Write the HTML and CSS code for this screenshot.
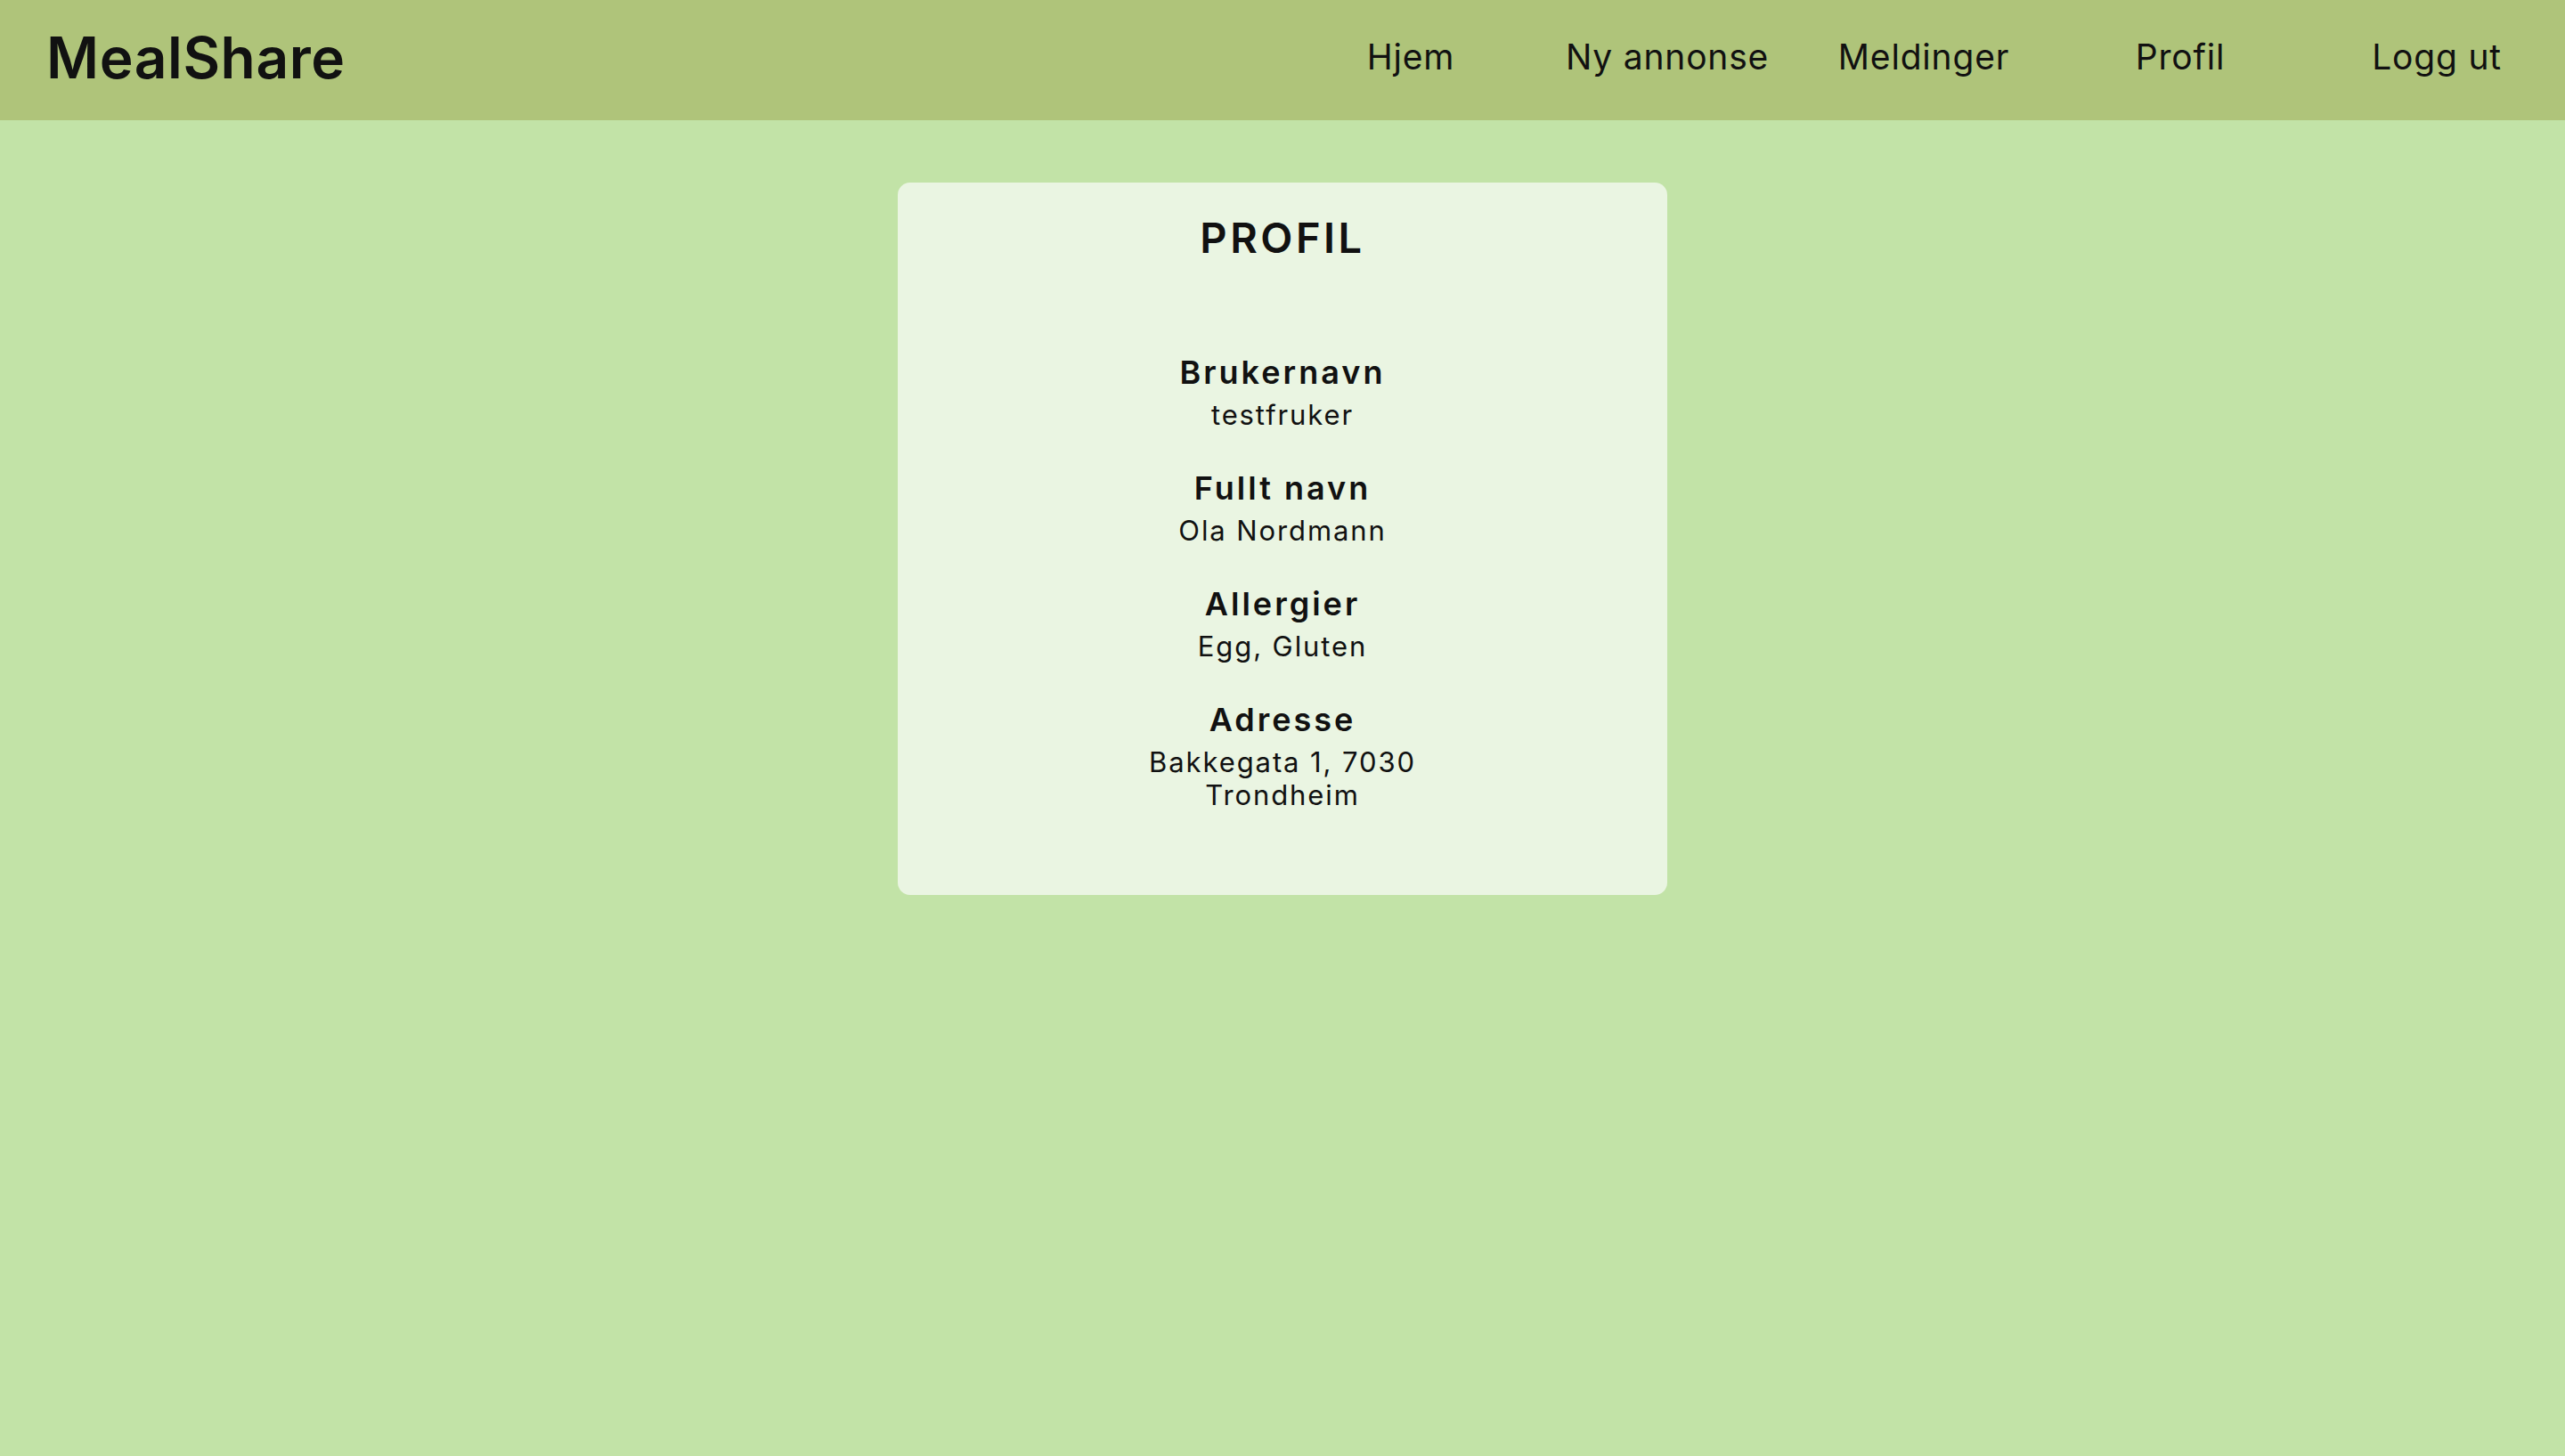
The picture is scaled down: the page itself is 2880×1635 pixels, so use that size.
FILE: index.html
```html
<!DOCTYPE html>
<html lang="no">
<head>
<meta charset="utf-8">
<title>MealShare – Profil</title>
<link rel="stylesheet" href="styles.css">
</head>
<body>
<header class="topbar">
  <div class="logo">MealShare</div>
  <nav class="nav">
    <a class="nav-item" href="#">Hjem</a>
    <a class="nav-item" href="#">Ny annonse</a>
    <a class="nav-item" href="#">Meldinger</a>
    <a class="nav-item" href="#">Profil</a>
    <a class="nav-item" href="#">Logg ut</a>
  </nav>
</header>
<main class="main">
  <section class="card">
    <h1 class="card-title">PROFIL</h1>
    <div class="fields">
      <div class="field">
        <div class="label">Brukernavn</div>
        <div class="value">testfruker</div>
      </div>
      <div class="field">
        <div class="label">Fullt navn</div>
        <div class="value">Ola Nordmann</div>
      </div>
      <div class="field">
        <div class="label">Allergier</div>
        <div class="value">Egg, Gluten</div>
      </div>
      <div class="field">
        <div class="label">Adresse</div>
        <div class="value">Bakkegata 1, 7030 Trondheim</div>
      </div>
    </div>
  </section>
</main>
</body>
</html>
```
FILE: styles.css
```css
* { box-sizing: border-box; }
html, body { margin: 0; padding: 0; }
body {
  font-family: Inter, "Noto Sans", sans-serif;
  background: #c2e3a7;
  color: #111111;
  min-height: 1635px;
}
.topbar {
  height: 135px;
  background: #afc47a;
  display: flex;
  align-items: center;
}
.logo {
  width: 50%;
  padding-left: 52px;
  font-size: 64px;
  font-weight: 600;
  line-height: 1.2;
  padding-bottom: 4px;
  letter-spacing: 0.6px;
}
.nav {
  width: 50%;
  display: flex;
  align-items: center;
}
.nav-item {
  flex: 1;
  text-align: center;
  font-size: 39px;
  line-height: 48px;
  letter-spacing: 0.8px;
  color: #111111;
  text-decoration: none;
  padding-bottom: 8px;
}
.main {
  display: flex;
  justify-content: center;
  padding-top: 70px;
}
.card {
  width: 864px;
  background: #eaf5e2;
  border-radius: 14px;
  padding: 33px 0 94px;
  display: flex;
  flex-direction: column;
  align-items: center;
  text-align: center;
}
.card-title {
  margin: 0 0 100px;
  font-size: 47px;
  line-height: 58px;
  font-weight: 600;
  letter-spacing: 3.5px;
}
.fields {
  display: flex;
  flex-direction: column;
  align-items: center;
  gap: 42px;
  width: 340px;
}
.label {
  font-size: 36px;
  line-height: 44px;
  font-weight: 600;
  letter-spacing: 3px;
  margin-bottom: 7px;
}
.value {
  font-size: 31px;
  line-height: 37px;
  letter-spacing: 1.9px;
}
```
